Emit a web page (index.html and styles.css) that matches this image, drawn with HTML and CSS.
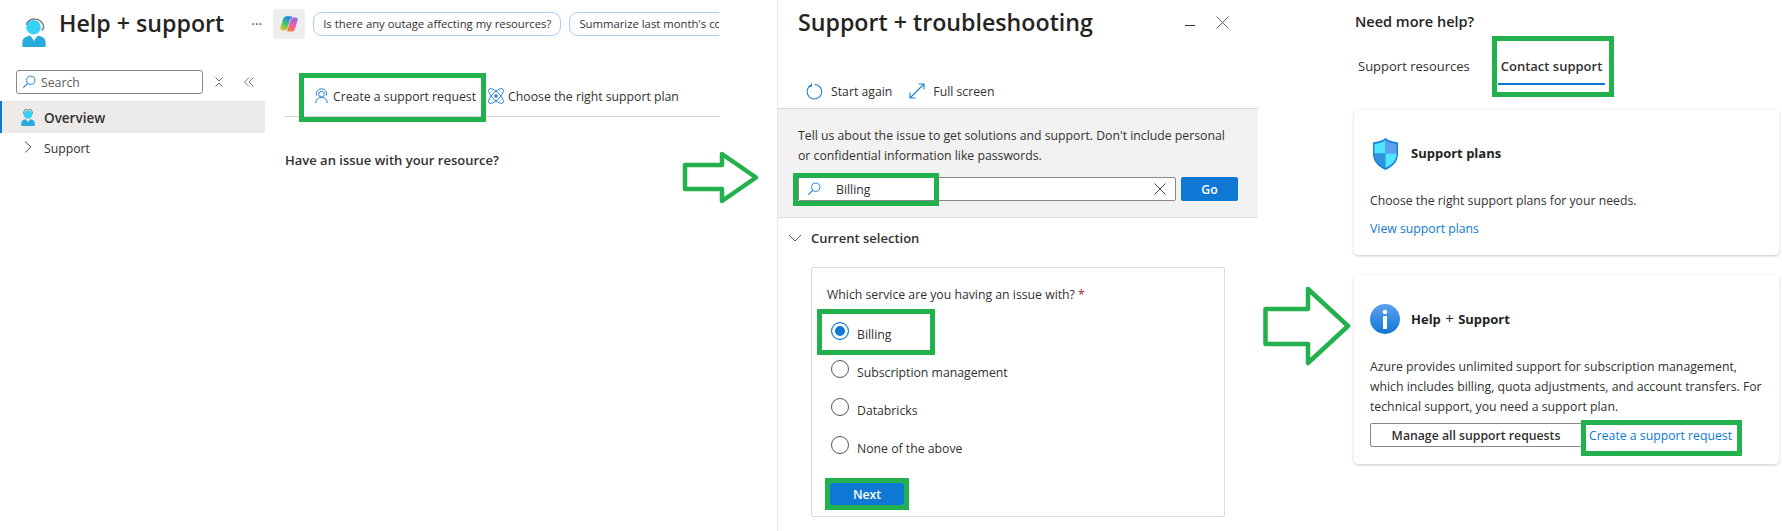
FILE: index.html
```html
<!DOCTYPE html>
<html lang="en">
<head>
<meta charset="utf-8">
<title>Help + support</title>
<link rel="stylesheet" href="styles.css">
</head>
<body>
<div class="page">
  <section class="left">
    <header class="left-head">
      <svg class="head-icon" viewBox="0 0 24 30" width="24" height="29"><path d="M4 7a9 9 0 0 1 9-6c5 0 9 4 9 9l-2 3" fill="none" stroke="#7a7a7a" stroke-width="1.6"/><circle cx="11.500" cy="9.500" r="7.500" fill="#35d2f5"/><path d="M0 30v-5c0-4 3-6 8-7l4 5 4-5c5 1 8 3 8 7v5z" fill="#2aa9dc"/><path d="M9 18h6l-3 6z" fill="#e8fafd"/></svg>
      <h1 class="title">Help + support</h1>
      <span class="dots">···</span>
      <span class="copilot"><svg viewBox="0 0 20 20" width="20" height="20"><defs><linearGradient id="cg1" x1="0.6" y1="0" x2="0.2" y2="1"><stop offset="0" stop-color="#1c8fe8"/><stop offset=".5" stop-color="#43c66a"/><stop offset="1" stop-color="#f3c22c"/></linearGradient><linearGradient id="cg2" x1="0.8" y1="0" x2="0.3" y2="1"><stop offset="0" stop-color="#8d6cf0"/><stop offset=".55" stop-color="#e85fb0"/><stop offset="1" stop-color="#f7803c"/></linearGradient></defs><path d="M7 2.500h5L8.500 14c-.5 1.500-1.500 2.500-3 2.500H3.500C1.500 16.500 1 15 1.500 13.500L4 5C4.500 3.500 5.500 2.500 7 2.500z" fill="url(#cg1)"/><path d="M13 17.500H8L11.500 6c.5-1.500 1.500-2.500 3-2.500h2c2 0 2.500 1.500 2 3L16 15c-.5 1.500-1.500 2.500-3 2.500z" fill="url(#cg2)"/><path d="M7 2.500h6l-.500 2H10c-1 0-1.500.5-1.800 1.500z" fill="#2b7fe0"/></svg></span>
      <div class="chips">
        <span class="chip">Is there any outage affecting my resources?</span>
        <span class="chip">Summarize last month's cost</span>
      </div>
    </header>
    <div class="left-body">
      <nav class="side">
        <div class="side-tools">
          <div class="side-search">
            <svg viewBox="0 0 16 16" width="14" height="14"><circle cx="10" cy="6" r="4.700" fill="none" stroke="#1b7fd6" stroke-width="1.100"/><path d="M6.500 9.500L1.500 14.500" stroke="#1b7fd6" stroke-width="1.300"/></svg>
            <span>Search</span>
          </div>
          <svg class="tool" viewBox="0 0 12 12" width="12" height="12"><path d="M2.500 1.500L6 5l3.500-3.500M2.500 10.500L6 7l3.500 3.500" fill="none" stroke="#666" stroke-width="1"/></svg>
          <svg class="tool tool2" viewBox="0 0 12 12" width="12" height="12"><path d="M6 1.500L1.500 6 6 10.500M10.500 1.500L6 6l4.500 4.500" fill="none" stroke="#777" stroke-width="1"/></svg>
        </div>
        <div class="side-item active">
          <svg viewBox="0 0 24 30" width="14" height="17"><path d="M4 8a8 8 0 0 1 16 0" fill="none" stroke="#7a7a7a" stroke-width="2"/><circle cx="12" cy="9.500" r="7.500" fill="#35d2f5"/><path d="M0 30v-5c0-4 3-6 8-7l4 5 4-5c5 1 8 3 8 7v5z" fill="#2aa9dc"/></svg>
          <span>Overview</span>
        </div>
        <div class="side-item">
          <svg class="chev" viewBox="0 0 10 14" width="10" height="14"><path d="M2 1.500L8 7l-6 5.500" fill="none" stroke="#555" stroke-width="1"/></svg>
          <span>Support</span>
        </div>
      </nav>
      <main class="left-main">
        <div class="cmdbar">
          <span class="cmd"><svg viewBox="0 0 16 18" width="15" height="16"><circle cx="8" cy="7" r="3.200" fill="none" stroke="#1b7fd6" stroke-width="1.100"/><path d="M2.500 8.500a5.800 5.800 0 1 1 11 0M1.500 17c0-4 3-6.500 6.500-6.500s6.500 2.500 6.500 6.500" fill="none" stroke="#1b7fd6" stroke-width="1.100"/></svg>Create a support request</span>
          <span class="cmd cmd2"><svg viewBox="0 0 18 18" width="16" height="16"><g fill="none" stroke="#1b7fd6" stroke-width="1"><ellipse cx="9" cy="9" rx="11" ry="4.200" transform="rotate(45 9 9)"/><ellipse cx="9" cy="9" rx="11" ry="4.200" transform="rotate(-45 9 9)"/></g><circle cx="9" cy="9" r="2" fill="#1b7fd6"/></svg>Choose the right support plan</span>
        </div>
        <h2 class="issue">Have an issue with your resource?</h2>
      </main>
    </div>
  </section>

  <section class="mid">
    <header class="mid-head">
      <h1 class="title">Support + troubleshooting</h1>
      <span class="min"></span>
      <svg class="close" viewBox="0 0 13 13" width="13" height="13"><path d="M.5.500l12 12M12.500.500l-12 12" stroke="#666" stroke-width="1"/></svg>
    </header>
    <div class="mid-tools">
      <span class="mt"><svg viewBox="0 0 18 18" width="17" height="17"><path d="M5.500 2.300a7.700 7.700 0 1 0 3.500-.8" fill="none" stroke="#1b7fd6" stroke-width="1.100"/><path d="M5.800 .5v3h-3.300" fill="none" stroke="#1b7fd6" stroke-width="1.100"/></svg>Start again</span>
      <span class="mt mt2"><svg viewBox="0 0 16 16" width="16" height="16"><path d="M1 15L15 1M9.500 1H15v5.500M1 9.500V15h5.500" fill="none" stroke="#1b7fd6" stroke-width="1.100"/></svg>Full screen</span>
    </div>
    <div class="ask">
      <p>Tell us about the issue to get solutions and support. Don't include personal or confidential information like passwords.</p>
      <div class="ask-row">
        <div class="ask-input">
          <svg viewBox="0 0 16 16" width="14" height="14"><circle cx="10" cy="6" r="4.700" fill="none" stroke="#1b7fd6" stroke-width="1.100"/><path d="M6.500 9.500L1.500 14.500" stroke="#1b7fd6" stroke-width="1.300"/></svg>
          <span class="val">Billing</span>
          <svg class="clear" viewBox="0 0 12 12" width="12" height="12"><path d="M.5.500l11 11M11.500.500l-11 11" stroke="#444" stroke-width="1"/></svg>
        </div>
        <span class="go">Go</span>
      </div>
    </div>
    <div class="cur">
      <svg viewBox="0 0 14 8" width="14" height="8"><path d="M1 1l6 6 6-6" fill="none" stroke="#555" stroke-width="1"/></svg>
      <span>Current selection</span>
    </div>
    <div class="qcard">
      <div class="q">Which service are you having an issue with? <span class="req">*</span></div>
      <div class="opt on"><i class="radio"></i><span>Billing</span></div>
      <div class="opt"><i class="radio"></i><span>Subscription management</span></div>
      <div class="opt"><i class="radio"></i><span>Databricks</span></div>
      <div class="opt"><i class="radio"></i><span>None of the above</span></div>
      <span class="next">Next</span>
    </div>
  </section>

  <section class="right">
    <h2 class="more">Need more help?</h2>
    <div class="tabs">
      <span class="tab">Support resources</span>
      <span class="tab sel">Contact support</span>
    </div>
    <article class="card c1">
      <div class="card-head">
        <svg viewBox="0 0 28 33" width="27" height="32"><path d="M14 0c3 3 8 4 13 4.500V16c0 9-6 14-13 17C7 30 1 25 1 16V4.500C6 4 11 3 14 0z" fill="#1b7fd6"/><path d="M14 2C11 4.500 7 5.500 2.500 6v10h11.500z" fill="#50e6ff"/><path d="M14 2c3 2.500 7 3.500 11.500 4v10H14z" fill="#5ea0ef"/><path d="M2.500 16H14v15c-6-3-11.500-7-11.500-15z" fill="#2f93e0"/><path d="M25.500 16H14v15c6-3 11.500-7 11.500-15z" fill="#50e6ff"/></svg>
        <h3>Support plans</h3>
      </div>
      <p>Choose the right support plans for your needs.</p>
      <a class="link view">View support plans</a>
    </article>
    <article class="card c2">
      <div class="card-head">
        <svg viewBox="0 0 30 30" width="30" height="30"><defs><linearGradient id="ig" x1="0" y1="0" x2="0" y2="1"><stop offset="0" stop-color="#5ea0ef"/><stop offset="1" stop-color="#0f78d4"/></linearGradient></defs><circle cx="15" cy="15" r="15" fill="url(#ig)"/><rect x="13" y="12" width="4" height="13" fill="#fff"/><circle cx="15" cy="8" r="2.300" fill="#fff"/></svg>
        <h3>Help <span class="plus">+</span> Support</h3>
      </div>
      <p>Azure provides unlimited support for subscription management, which includes billing, quota adjustments, and account transfers. For technical support, you need a support plan.</p>
      <div class="card-actions">
        <span class="btn">Manage all support requests</span>
        <a class="link">Create a support request</a>
      </div>
    </article>
  </section>

  <div class="mark m1"></div>
  <div class="mark m2"></div>
  <div class="mark m3"></div>
  <div class="mark m4"></div>
  <div class="mark m5"></div>
  <div class="mark m6"></div>
  <svg class="arrow a1" viewBox="0 0 78 54" width="78" height="54"><path d="M3 14H40V3L74 26.500 40 50V38H3z" fill="none" stroke="#22b14c" stroke-width="4.500" stroke-linejoin="round"/></svg>
  <svg class="arrow a2" viewBox="0 0 90 84" width="90" height="84"><path d="M2.500 23H45V3L85 40 45 77V58H2.500z" fill="none" stroke="#22b14c" stroke-width="4.500" stroke-linejoin="round"/></svg>
</div>
</body>
</html>
```

FILE: styles.css
```css
* { box-sizing: border-box; }
html, body { margin: 0; padding: 0; background: #fff; }
body { font-family: "Open Sans", "Noto Sans", sans-serif; font-size: 12.25px; color: #323130; overflow: hidden; }
h1, h2, h3, p { margin: 0; }
.page { position: relative; display: flex; width: 1782px; height: 531px; overflow: hidden; }

.left { width: 777px; flex: none; }
.left-head { display: flex; align-items: center; height: 53px; padding-left: 22px; }
.head-icon { margin-top: 11px; flex: none; }
.title { font-size: 23.2px; font-weight: 600; color: #252423; line-height: 32px; white-space: nowrap; }
.left-head .title { margin-left: 13px; margin-top: -7px; }
.dots { margin-left: 27px; width: 22px; font-size: 14px; color: #555; margin-top: -6px; }
.copilot { display: flex; align-items: center; justify-content: center; width: 32px; height: 30px; margin-top: -6px; background: #eeeeee; border-radius: 3px; }
.chips { display: flex; gap: 8px; width: 406px; margin-left: 8px; margin-top: -6px; overflow: hidden; white-space: nowrap; }
.chip { flex: none; height: 24px; line-height: 22px; padding: 0 9px; border: 1px solid #a9cdf3; border-radius: 9px; font-size: 11.3px; color: #323130; }

.left-body { display: flex; }
.side { width: 265px; flex: none; padding-top: 17px; }
.side-tools { display: flex; align-items: center; height: 24px; padding-left: 16px; margin-bottom: 7px; }
.side-search { display: flex; align-items: center; gap: 5px; width: 187px; height: 24px; padding-left: 5px; border: 1px solid #8a8886; border-radius: 3px; color: #605e5c; }
.tool { margin-left: 10px; }
.tool2 { margin-left: 18px; }
.side-item { display: flex; align-items: center; gap: 9px; height: 32px; padding-left: 21px; }
.side-item span { padding-top: 2px; }
.side-item .chev { margin-right: 2px; }
.side-item.active { font-size: 13.5px; font-weight: 600; background: #edebe9; box-shadow: inset 2px 0 #0f78d4; }
.side-item + .side-item { margin-top: -2px; padding-left: 23px; }

.left-main { flex: 1; padding: 31px 57px 0 20px; }
.cmdbar { display: flex; height: 33px; padding: 0 0 8px 29px; border-bottom: 1px solid #d6d6d6; }
.cmd { display: flex; align-items: center; gap: 4px; white-space: nowrap; }
.cmd2 { margin-left: 12px; }
.issue { margin-top: 33px; font-size: 13px; font-weight: 600; color: #323130; line-height: 20px; }

.mid { width: 481px; flex: none; border-left: 1px solid #e8e8e8; }
.mid-head { display: flex; align-items: center; height: 41px; padding-left: 20px; }
.mid-head .title { margin-top: 2px; }
.min { width: 10px; height: 1px; margin-left: auto; margin-top: 10px; background: #333; }
.close { margin: 4px 29px 0 21px; }
.mid-tools { display: flex; height: 68px; align-items: flex-end; padding: 0 0 6px 28px; border-bottom: 1px solid #d6d6d6; }
.mt { display: flex; align-items: center; gap: 8px; height: 22px; }
.mt2 { margin-left: 17px; }
.ask { height: 109px; padding: 17px 20px 0; background: #f2f2f2; border-bottom: 1px solid #e0e0e0; }
.ask p { line-height: 20px; width: 440px; }
.ask-row { display: flex; gap: 5px; margin-top: 11px; }
.ask-input { display: flex; align-items: center; width: 378px; height: 24px; padding: 0 9px 0 8px; background: #fff; border: 1px solid #8a8886; border-radius: 2px; }
.val { margin-left: 15px; }
.clear { margin-left: auto; }
.go { display: flex; align-items: center; justify-content: center; width: 57px; height: 24px; background: #0f78d4; color: #fff; font-weight: 600; border-radius: 2px; }
.cur { display: flex; align-items: center; gap: 9px; height: 35px; margin-top: 2px; padding-left: 10px; font-size: 13px; font-weight: 600; color: #323130; }
.qcard { width: 414px; height: 250px; margin: 12px 0 0 33px; padding: 17px 15px 0; border: 1px solid #dcdcdc; border-radius: 2px; }
.q { height: 20px; line-height: 20px; }
.req { color: #a4262c; }
.opt { display: flex; align-items: center; gap: 8px; height: 38px; padding-left: 4px; }
.q + .opt { margin-top: 8px; }
.opt span { padding-top: 4px; }
.radio { width: 18px; height: 18px; border-radius: 50%; border: 1px solid #555; background: #fff; margin-top: -3px; }
.on .radio { border-color: #0f78d4; background: #0f78d4; box-shadow: inset 0 0 0 3px #fff; }
.next { display: flex; align-items: center; justify-content: center; width: 74px; height: 22px; margin: 18px 0 0 3px; background: #0f78d4; color: #fff; font-weight: 600; border-radius: 1px; }

.right { flex: 1; padding: 12px 3px 0 96px; }
.more { margin-left: 1px; font-size: 14.5px; font-weight: 600; color: #252423; line-height: 20px; }
.tabs { display: flex; height: 53px; font-size: 13px; }
.tab { height: 53px; padding-top: 24px; line-height: 20px; white-space: nowrap; }
.tab:first-child { width: 114px; margin-left: 4px; margin-right: 26px; }
.tab.sel { width: 107px; font-weight: 600; text-align: center; border-bottom: 2px solid #0f78d4; }
.card { width: 425px; background: #fff; border-radius: 4px; box-shadow: 0 1px 3px rgba(0,0,0,.22); padding: 0 16px; }
.c1 { height: 145px; margin-top: 25px; padding-top: 28px; }
.c2 { height: 189px; margin-top: 20px; padding-top: 29px; }
.card-head { display: flex; align-items: center; gap: 12px; }
.c1 .card-head { padding-left: 2px; }
.c2 .card-head { gap: 11px; }
.card-head h3 { font-size: 13px; font-weight: 700; color: #252423; margin-top: -2px; }
.plus { font-size: 15px; font-weight: 400; padding: 0 1px; }
.c1 p { margin-top: 20px; line-height: 21px; }
.c2 p { margin-top: 23px; line-height: 20px; }
.link { color: #0f78d4; white-space: nowrap; }
.view { display: block; margin-top: 7px; line-height: 21px; }
.card-actions { display: flex; align-items: center; margin-top: 6px; }
.btn { display: flex; align-items: center; justify-content: center; width: 212px; height: 24px; border: 1px solid #8a8886; border-radius: 2px; font-weight: 600; }
.card-actions .link { margin-left: 7px; }

.mark { position: absolute; border: 5px solid #22b14c; pointer-events: none; }
.m1 { left: 299px; top: 73px; width: 187px; height: 49px; }
.m2 { left: 793px; top: 173px; width: 146px; height: 33px; }
.m3 { left: 817px; top: 309px; width: 118px; height: 46px; }
.m4 { left: 825px; top: 478px; width: 84px; height: 32px; }
.m5 { left: 1492px; top: 36px; width: 122px; height: 61px; }
.m6 { left: 1581px; top: 420px; width: 161px; height: 36px; }
.arrow { position: absolute; }
.a1 { left: 682px; top: 151px; }
.a2 { left: 1263px; top: 286px; }
```
